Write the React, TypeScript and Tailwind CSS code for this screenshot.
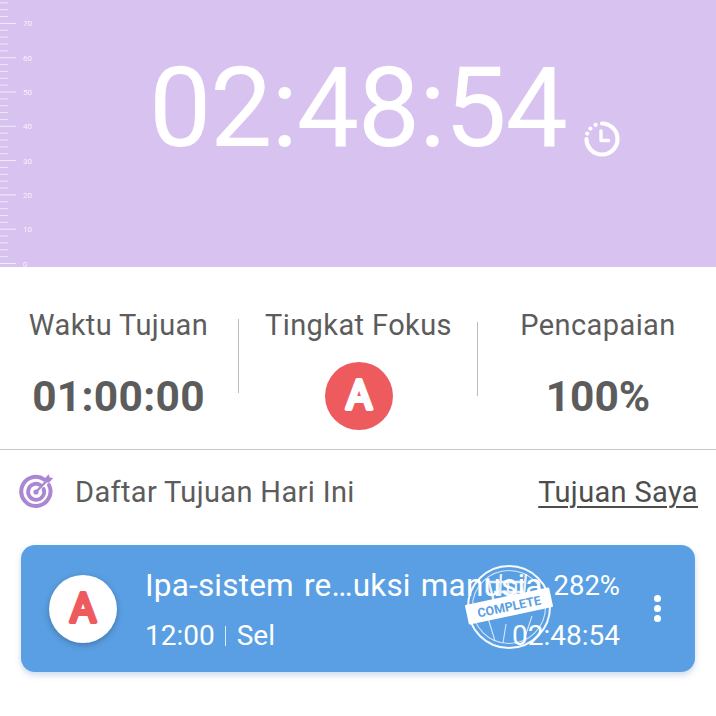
const FONT = "font-['Roboto','Liberation_Sans',sans-serif]";

const RULER_TICKS = Array.from({ length: 39 }, (_, i) => i);
const RULER_LABELS = [0, 10, 20, 30, 40, 50, 60, 70];

const Ruler = () => (
    <svg className="absolute left-0 top-0" width="40" height="267" viewBox="0 0 40 267">
        {RULER_TICKS.map(i => {
            const y = 263.5 - i * 6.86;
            const isLong = i % 5 === 0;
            return (
                <line
                    key={i}
                    x1="0"
                    x2={isLong ? 16 : 8}
                    y1={y}
                    y2={y}
                    stroke="#ffffff"
                    strokeOpacity={isLong ? 0.7 : 0.6}
                    strokeWidth="1"
                />
            );
        })}
        {RULER_LABELS.map(n => (
            <text
                key={n}
                x={n === 0 ? 25 : 27.5}
                y={263.5 - n * 3.43 + 3}
                textAnchor="middle"
                fontSize="8"
                fontFamily="Roboto, sans-serif"
                fill="#ffffff"
                fillOpacity="0.8"
            >
                {n}
            </text>
        ))}
    </svg>
);

const ClockIcon = () => (
    <svg width="38" height="38" viewBox="0 0 38 38" fill="none">
        <path d="M19 3.5a15.5 15.5 0 1 1-15.5 15.5" stroke="#fff" strokeWidth="4.2" strokeLinecap="round" />
        <circle cx="4.2" cy="13.6" r="2.1" fill="#fff" />
        <circle cx="7.4" cy="8.6" r="2.1" fill="#fff" />
        <circle cx="12.6" cy="4.8" r="2.1" fill="#fff" />
        <path d="M18 11v9.5h7.5" stroke="#fff" strokeWidth="3.4" strokeLinecap="round" strokeLinejoin="round" />
    </svg>
);

const TargetIcon = () => (
    <svg width="36" height="36" viewBox="0 0 36 36" fill="none">
        <path d="M25.5 7.6A14.6 14.6 0 1 0 30 13" stroke="#ab87d3" strokeWidth="4" strokeLinecap="round" />
        <path d="M21.6 13.2A8 8 0 1 0 24.6 17" stroke="#ab87d3" strokeWidth="3.8" strokeLinecap="round" />
        <circle cx="17" cy="20" r="2.6" fill="#ab87d3" />
        <path d="M17 20 28 8.5" stroke="#ab87d3" strokeWidth="2.4" strokeLinecap="round" />
        <path d="m25.5 7 4-4.8 1.3 3.2 3.4.7-4.2 4.6-3.6-.4z" fill="#ab87d3" />
    </svg>
);

// Rounded heavy "A" badge letter
const BadgeLetter = ({ color }: { color: string }) => (
    <svg width="68" height="68" viewBox="0 0 68 68">
        <text
            x="34"
            y="46.5"
            textAnchor="middle"
            fontSize="40"
            fontWeight="400"
            fontFamily="Roboto, sans-serif"
            fill={color}
            stroke={color}
            strokeWidth="3.8"
            strokeLinejoin="round"
        >
            A
        </text>
    </svg>
);

const CompleteStamp = () => (
    <svg className="absolute left-0 top-0" width="90" height="90" viewBox="0 0 90 90" fill="none">
        <circle cx="45" cy="45" r="41" stroke="#fff" strokeOpacity="0.95" strokeWidth="2" />
        <circle cx="45" cy="45" r="36.5" stroke="#fff" strokeOpacity="0.75" strokeWidth="1.1" />
        <path d="M24 56 31 79M68 54 60 78M42 62l-3 19" stroke="#fff" strokeOpacity="0.75" strokeWidth="1.1" />
        <path d="M24 16 30 40M37 12 36 34M62 12 60 32M26 20h36M30 30h30M44 21v12M52 21v12" stroke="#fff" strokeOpacity="0.85" strokeWidth="2.4" />
        <g transform="rotate(-12 45 44)">
            <rect x="2" y="34" width="86" height="20" rx="1" fill="#fff" />
            <text
                x="45"
                y="49"
                textAnchor="middle"
                fontSize="12.5"
                fontWeight="700"
                fontFamily="Roboto, sans-serif"
                fill="#5a9fe3"
            >
                COMPLETE
            </text>
        </g>
    </svg>
);

const App = () => {
    return (
        <div className={`${FONT} w-[716px] h-[716px] overflow-hidden bg-white`}>
            <div className="relative h-[267px] bg-[#d8c2f0] pl-[149px] pt-[43px] flex items-start">
                <Ruler />
                <span className="text-[111px] leading-[130px] font-normal text-white tracking-[-1.3px]">02:48:54</span>
                <div className="ml-[16px] mt-[77px]">
                    <ClockIcon />
                </div>
            </div>

            <div className="h-[183px] border-b border-[#c9c9c9] grid grid-cols-[237px_243px_236px]">
                <div className="flex flex-col items-center pt-[41px]">
                    <span className="text-[29px] leading-[34px] text-[#5c5c5c] tracking-[0.4px]">Waktu Tujuan</span>
                    <span className="mt-[31px] text-[42.5px] leading-[48px] font-bold text-[#5c5c5c] tracking-[0.3px]">01:00:00</span>
                </div>
                <div className="relative flex flex-col items-center pt-[41px]">
                    <div className="absolute left-[1px] top-[52px] h-[74px] w-px bg-[#bdbdbd]" />
                    <div className="absolute right-[2px] top-[55px] h-[74px] w-px bg-[#bdbdbd]" />
                    <span className="text-[29px] leading-[34px] text-[#5c5c5c] tracking-[0.4px]">Tingkat Fokus</span>
                    <div className="mt-[20px] size-[68px] rounded-full bg-[#ee5b5f]">
                        <BadgeLetter color="#ffffff" />
                    </div>
                </div>
                <div className="flex flex-col items-center pt-[41px]">
                    <span className="text-[29px] leading-[34px] text-[#5c5c5c] tracking-[0.4px]">Pencapaian</span>
                    <span className="mt-[31px] text-[42.5px] leading-[48px] font-bold text-[#5c5c5c]">100%</span>
                </div>
            </div>

            <div className="h-[95px] pl-[19px] pr-[18px] pt-[22px] flex items-start">
                <TargetIcon />
                <span className="ml-[20px] text-[29px] leading-[40px] text-[#5c5c5c] tracking-[0.35px]">Daftar Tujuan Hari Ini</span>
                <span className="ml-auto text-[29px] leading-[40px] text-[#4d4d4d] underline underline-offset-[4px] decoration-[1.5px] tracking-[0.35px]">Tujuan Saya</span>
            </div>

            <div className="relative mx-[21px] h-[127px] rounded-[14px] bg-[#5a9fe3] shadow-[0_3px_6px_rgba(90,130,190,0.3)] pl-[28px] flex items-center text-white">
                <div className="size-[68px] shrink-0 rounded-full bg-white shadow-[0_2px_6px_rgba(0,0,0,0.25)]">
                    <BadgeLetter color="#ee5b5f" />
                </div>
                <div className="ml-[28px] w-[475px] pt-[3px] flex flex-col gap-[16px]">
                    <div className="flex items-center justify-between">
                        <span className="text-[31.5px] leading-[36px] whitespace-nowrap tracking-[0.2px] [word-spacing:2px]">Ipa-sistem re…uksi manusia</span>
                        <span className="text-[27.5px] leading-[36px]">282%</span>
                    </div>
                    <div className="flex items-center justify-between">
                        <span className="text-[28px] leading-[32px] flex items-center">
                            12:00
                            <span className="ml-[10px] mr-[11px] h-[20px] w-px bg-white/80" />
                            Sel
                        </span>
                        <span className="text-[28px] leading-[32px]">02:48:54</span>
                    </div>
                </div>
                <div className="ml-[34px] flex flex-col gap-[3px]">
                    <span className="size-[7px] rounded-full bg-white" />
                    <span className="size-[7px] rounded-full bg-white" />
                    <span className="size-[7px] rounded-full bg-white" />
                </div>
                <div className="absolute left-[443px] top-[17px] size-[90px]">
                    <CompleteStamp />
                </div>
            </div>
        </div>
    );
};

export default App;
